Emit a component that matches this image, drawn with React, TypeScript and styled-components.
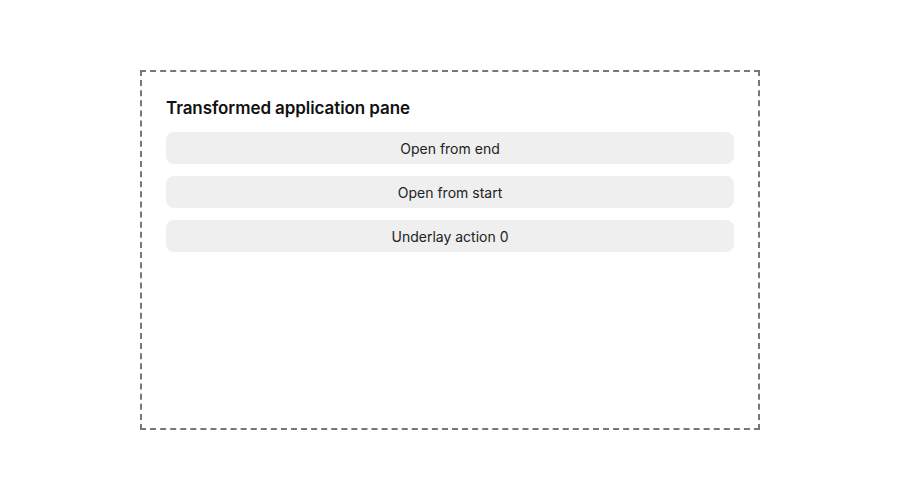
import React, { FC } from 'react'
import styled, { createGlobalStyle } from 'styled-components'

const GlobalStyle = createGlobalStyle`
  html, body {
    margin: 0;
    padding: 0;
    background: #fff;
  }
  body {
    font-family: Inter, "Noto Sans", sans-serif;
    color: #111;
  }
`

const actions = ['Open from end', 'Open from start', 'Underlay action 0']

const App: FC = () => {
    return (
        <>
            <GlobalStyle/>
            <Page>
                <Pane>
                    <Title>Transformed application pane</Title>
                    <ActionList>
                        {actions.map(label => (
                            <ActionButton key={label} type="button">{label}</ActionButton>
                        ))}
                    </ActionList>
                </Pane>
            </Page>
        </>
    )
}

export default App

const Page = styled.main`
  width: 100%;
  height: 100vh;
  display: flex;
  align-items: center;
  justify-content: center;
`

const Pane = styled.section`
  box-sizing: border-box;
  width: 620px;
  height: 360px;
  padding: 24px;
  border: 2px dashed #777;
  display: flex;
  flex-direction: column;
`

const Title = styled.h2`
  margin: 0 0 12px;
  font-size: 17px;
  line-height: 24px;
  font-weight: 600;
  letter-spacing: -0.08px;
  color: #111;
`

const ActionList = styled.div`
  display: flex;
  flex-direction: column;
  gap: 12px;
`

const ActionButton = styled.button`
  height: 32px;
  border: none;
  border-radius: 8px;
  background: #efefef;
  font-family: Inter, "Noto Sans", sans-serif;
  font-size: 14px;
  color: #222;
  cursor: pointer;
`
